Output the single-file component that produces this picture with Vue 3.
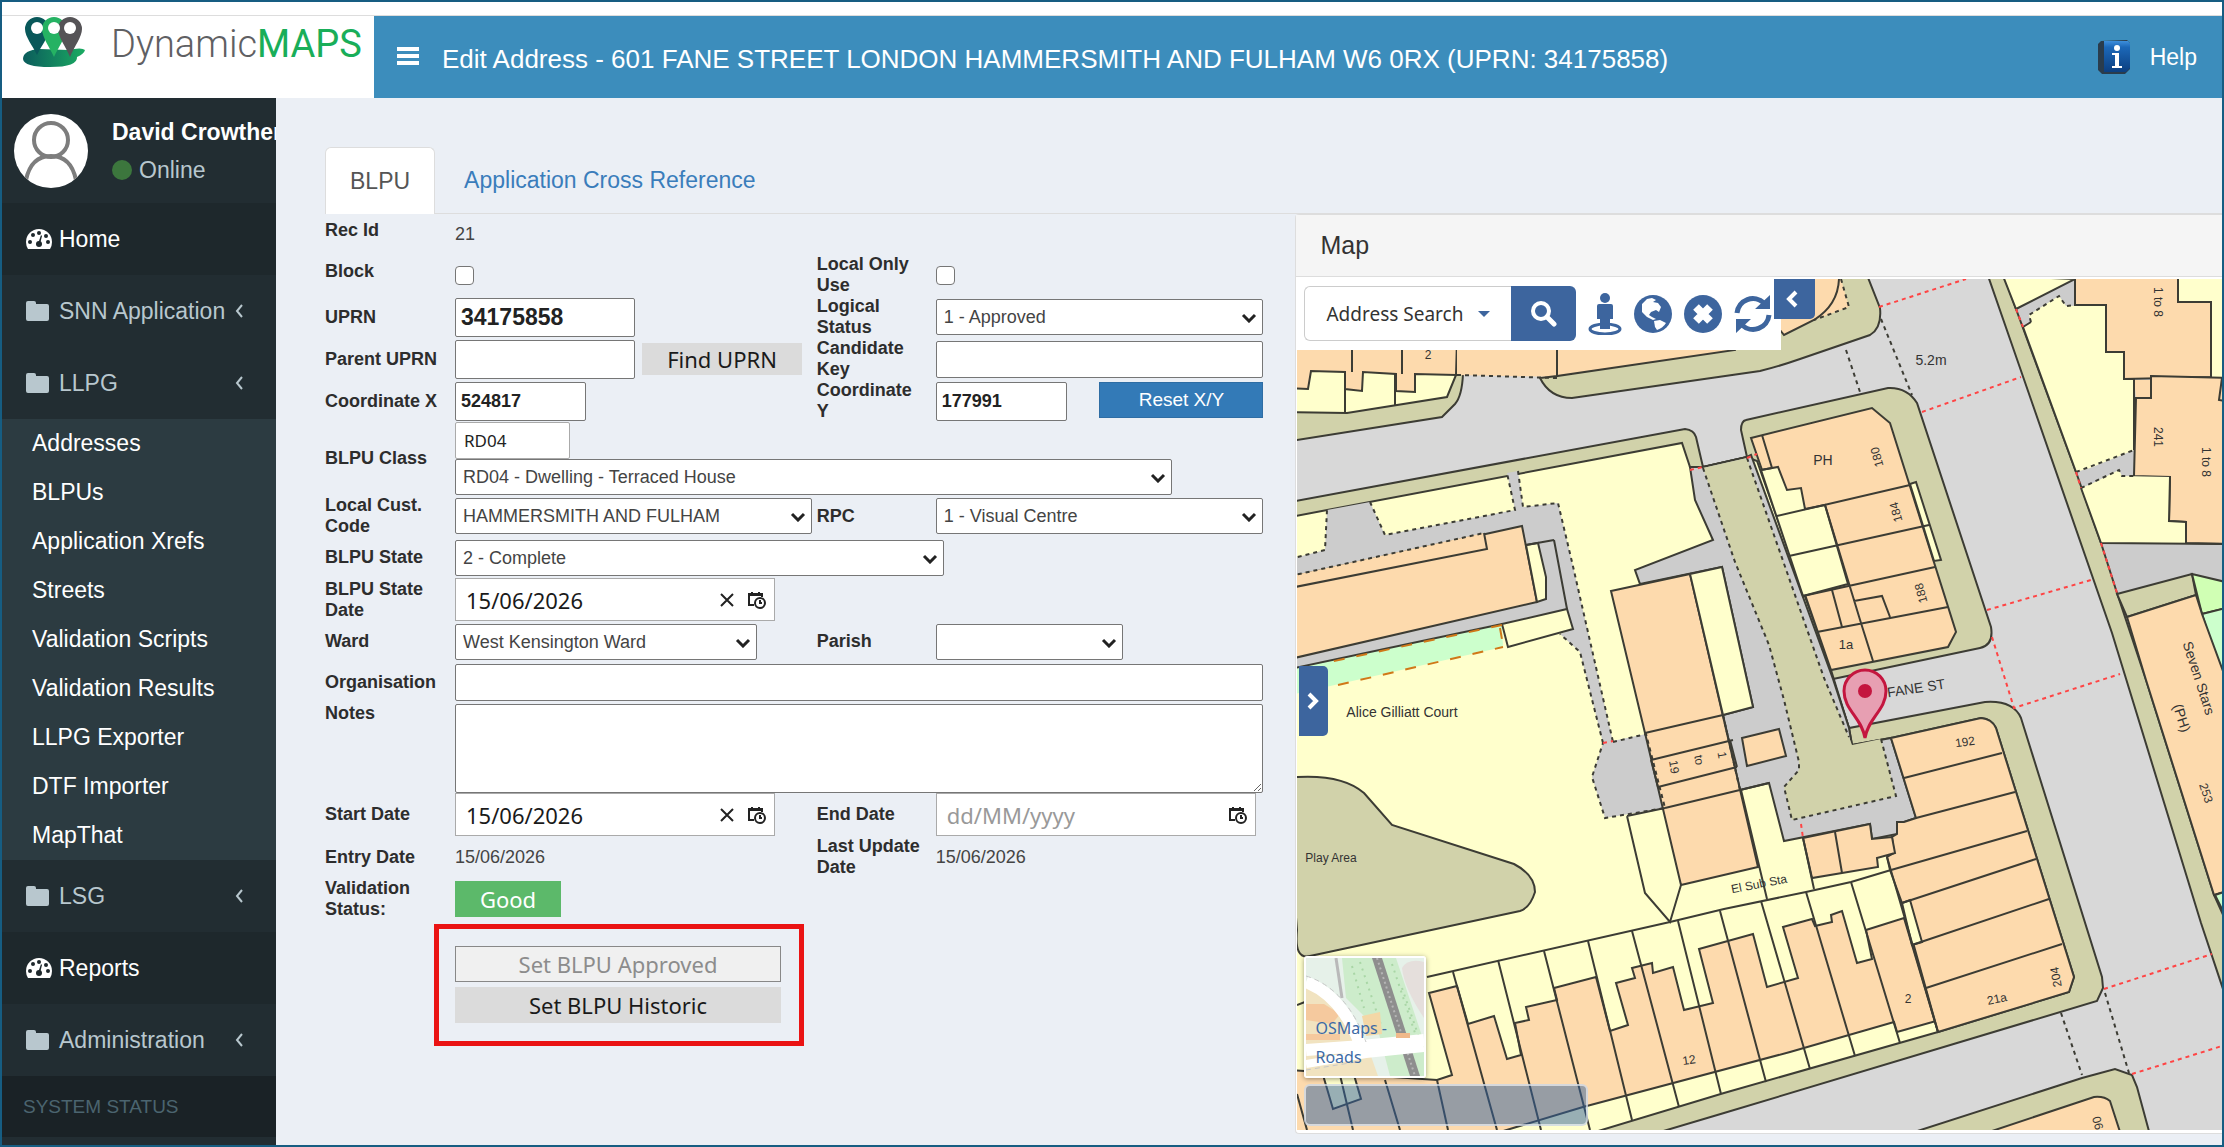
<script setup>
import { ref } from 'vue'

const llpgLinks = [
  'Addresses',
  'BLPUs',
  'Application Xrefs',
  'Streets',
  'Validation Scripts',
  'Validation Results',
  'LLPG Exporter',
  'DTF Importer',
  'MapThat'
]

const form = ref({
  block: false,
  localOnly: false,
  uprn: '34175858',
  parentUprn: '',
  candidateKey: '',
  x: '524817',
  y: '177991',
  classCode: 'RD04',
  stateDate: '15/06/2026',
  organisation: '',
  notes: '',
  startDate: '15/06/2026',
  endDate: ''
})

/* Map geometry, in map units: [class, path] */
const areas = [
  ['verge', 'M1290 502L1685 429Q1694 430 1696 437L1703 467L1747 457L1741 430Q1741 421 1746 420L1888 388Q1907 387 1917 403L1991 627Q1994 645 1980 648L1833 679L1849 728L1985 702Q2013 700 2021 718L2102 977L2103 988L2097 1001L1724 1113L1650 1135L1285 1135Z'],
  ['yard', 'M1290 517L1682 443L1690 467L1703 467L1747 457L1757 461L1831 670L1849 728L1852 745L1891 738L1981 718Q1992 719 1996 728L2074 977L2069 992L1938 1032L1724 1093L1585 1135L1285 1135Z'],
  ['path', 'M1690 467L1703 467L1747 457L1751 455L1833 679L1849 728L1852 745L1891 738L1916 818L1904 822L1897 822L1897 834L1872 839L1870 824L1784 841L1769 783L1740 790L1723 715L1753 707L1722 567L1640 584L1635 570L1713 540L1695 500Z'],
  ['verge plain', 'M1703 468L1735 562L1769 645L1784 700L1799 762L1799 770L1784 787L1792 820L1896 796L1881 739L1852 745L1849 737L1824 678L1747 458Z'],
  ['path plain', 'M1290 559L1325 550L1327 510L1370 502L1385 535L1515 510L1507 473L1518 471L1523 507L1558 503L1572 562L1613 742L1603 743L1580 652L1560 634L1573 629L1567 609L1290 669Z'],
  ['path plain', 'M1603 743L1646 734L1665 808L1605 818L1592 777Z'],
  ['house', 'M1290 577L1522 526L1537 602L1290 659Z'],
  ['house plain', 'M1290 576L1484 533L1487 549L1290 588Z'],
  ['yard', 'M1526 545L1538 543L1546 577L1546 599L1537 602Z'],
  ['mint plain', 'M1290 669L1502 624L1503 647L1290 695Z'],
  ['yard', 'M1502 624L1567 609L1573 629L1508 647Z'],
  ['house', 'M1611 591L1690 574L1758 867L1681 885L1645 733Z'],
  ['yard', 'M1690 574L1722 567L1753 707L1723 715Z'],
  ['house', 'M1742 738L1779 729L1786 756L1747 766Z'],
  ['verge', 'M1285 778Q1340 772 1364 793L1392 825L1514 864Q1535 875 1535 892Q1530 908 1520 911L1310 956Q1294 960 1297 930Z'],
  ['house', 'M1290 1070L1437 1080L1452 1075L1429 993L1457 986L1468 1024L1494 1016L1507 1059L1521 1055L1515 1023L1529 1020L1526 1007L1557 1000L1554 988L1596 977L1610 1031L1628 1025L1616 983L1635 978L1632 968L1652 963L1653 973L1673 967L1684 1010L1713 1003L1699 949L1753 934L1767 987L1798 978L1783 927L1812 919L1815 926L1832 922L1831 915L1842 911L1857 963L1872 959L1866 930L1904 918L1938 1032L1936 1021L1897 1032L1894 1022L1790 1052L1583 1107L1490 1135L1285 1135Z'],
  ['yard', 'M1323 1075L1333 1109L1361 1099L1354 1075Z'],
  ['house', 'M1891 738L1981 718Q1992 719 1996 728L2074 977L2069 992L1938 1032L1902 903L1890 870L1887 857L1894 853L1892 837L1897 834L1897 822L1904 822L1916 818Z'],
  ['yard', 'M1902 903L1910 900L1922 942L1912 945Z'],
  ['house', 'M1803 838L1870 824L1872 839L1892 837L1895 853L1877 858L1878 867L1812 878Z'],
  ['house', 'M1751 438L1872 408L1890 423L1956 632L1948 647L1831 670Z'],
  ['yard', 'M1761 470L1778 467L1787 490L1801 488L1805 509L1825 505L1848 584L1803 596Z'],
  ['yard', 'M1910 484L1916 482L1941 560L1934 561Z'],
  ['verge', 'M1285 442L1442 417L1455 404Q1462 396 1463 374L1440 370L1285 360Z'],
  ['yard', 'M1285 412L1347 413L1447 397L1456 375L1456 340L1285 340Z'],
  ['house', 'M1290 340L1457 340L1456 375L1415 374L1415 392L1396 391L1396 374L1363 372L1362 391L1345 389L1345 372L1311 371L1308 389L1290 388Z'],
  ['house plain', 'M1457 340L1557 340L1557 377L1457 375Z'],
  ['verge', 'M1540 378Q1550 398 1572 398L1760 371Q1780 366 1800 359L1870 335Q1882 328 1880 308L1865 270L1557 270L1557 376Z'],
  ['house', 'M1557 270L1557 376L1735 350L1735 270Z'],
  ['house plain', 'M1770 279L1841 279L1849 307L1814 320L1784 335L1780 330Z'],
  ['verge', 'M1986 270L2019 365L2112 633L2201 923L2230 1010L2230 270Z'],
  ['path', 'M2002 270L2016 309L2076 472L2101 543L2117 593L2146 680L2214 895L2230 930L2230 270Z'],
  ['yard', 'M2003 276L2075 279L2016 309Z'],
  ['yard plain', 'M2023 327L2031 322L2029 315L2059 296L2066 306L2106 305L2106 352L2124 352L2124 379L2134 379L2134 450L2090 468L2076 472Z'],
  ['house', 'M2075 270L2178 270L2178 302L2211 302L2211 377L2124 379L2124 352L2106 352L2106 305L2075 305Z'],
  ['yard', 'M2178 270L2230 270L2230 378L2211 378L2211 302L2178 302Z'],
  ['house', 'M2151 376L2230 378L2230 544L2186 543L2186 522L2169 521L2170 477L2134 476L2136 398L2151 398Z'],
  ['house plain', 'M2134 380L2150 380L2150 397L2136 397Z'],
  ['yard plain', 'M2081 488L2091 484L2119 470L2122 476L2170 477L2169 521L2186 522L2186 543L2101 543Z'],
  ['verge', 'M2117 594L2192 574L2196 595L2127 617Z'],
  ['lime', 'M2192 574L2230 583L2230 607L2202 614Z'],
  ['mint', 'M2202 614L2230 607L2230 690L2222 677Z'],
  ['house', 'M2127 617L2196 595L2202 614L2230 690L2230 890L2214 895L2146 680Z'],
  ['mint', 'M2215 895L2230 890L2230 925Z'],
  ['verge', 'M1905 1135L2082 1078L2115 1069L2132 1075L2137 1087L2150 1135Z'],
  ['house', 'M1980 1135L2094 1097Q2104 1096 2110 1101L2121 1135Z']
]

const lines = [
  'M1290 588L1487 549L1484 533',
  'M1554 540L1567 609M1526 545L1554 540M1290 669L1502 624',
  'M1645 733L1723 715M1651 760L1733 740M1658 787L1737 767M1665 808L1769 783',
  'M1730 740L1737 767M1651 760L1658 787',
  'M1627 816L1645 893L1670 922L1681 885M1627 816L1665 808',
  'M1427 977L1670 922L1724 909L1806 892L1851 882L1891 870',
  'M1453 972L1497 1130M1498 960L1541 1130M1544 951L1590 1130M1588 941L1632 1120M1632 931L1679 1107M1678 921L1721 1094M1720 911L1766 1082M1761 901L1810 1069M1806 892L1855 1056M1851 882L1900 1043M1887 857L1938 1032',
  'M1437 1080L1448 1130M1385 1080L1400 1130M1340 1075L1353 1130M1297 1094L1307 1130M1297 1005L1310 1000',
  'M1904 778L2002 753M1916 818L2015 792M1891 870L2027 831M1902 903L2036 859M1912 945L2049 899M1926 988L2062 944',
  'M1835 832L1842 873M1803 838L1814 889M1741 790L1767 899',
  'M1762 435L1772 468L1761 470M1777 516L1910 485M1789 556L1929 525M1803 596L1935 567M1817 632L1948 607M1825 505L1861 623L1873 661M1832 590L1842 627M1854 601L1882 596L1890 617',
  'M1352 340V372M1402 340V374M1345 372V413M1395 374V405',
  'M1839 279Q1838 305 1814 320L1784 335L1780 330',
  'M2023 327L2076 472M2081 488L2101 543L2230 544M2023 327L2031 322M2106 305V352H2124V379H2134V450M2170 477L2169 521L2186 522V543',
  'M2222 378L2219 400L2224 401'
]

const dashes = [
  'M1703 468L1735 562L1769 645L1784 700L1799 762L1799 770L1784 787L1792 820L1896 796L1881 739',
  'M1747 458L1824 678L1849 737',
  'M1290 559L1325 550L1327 510M1370 502L1385 535L1515 510L1507 473M1518 471L1523 507L1558 503L1572 562L1613 742M1603 743L1580 652L1560 634M1290 576L1484 533',
  'M1613 742L1646 734L1665 808L1605 818L1592 777L1603 743',
  'M1723 715L1740 790M1457 375L1557 378M1841 279L1849 307L1814 320',
  'M1881 319L1912 395M1846 350L1861 395M2061 1013L2082 1075M2105 993L2129 1073',
  'M2031 322L2029 315L2059 296L2066 306L2075 305M2076 472L2134 450M2081 488L2119 470L2122 476L2134 476'
]

const reds = [
  'M1879 307L1966 279M1922 412L2021 377M1987 610L2091 580M1992 637L2014 708L2120 674M2104 989L2212 954M2132 1074L2222 1046',
  'M2016 309L2023 327M2076 472L2081 488M2101 543L2117 593M1690 470L1703 467M1747 458L1757 454M1603 743L1613 741M1801 824L1803 838'
]

/* [text, x, y, rotation, size] */
const labels = [
  ['2', 1428, 355, 0, 12],
  ['PH', 1823, 460, 0, 14],
  ['180', 1877, 457, -105, 12],
  ['184', 1896, 512, -105, 12],
  ['188', 1921, 593, -105, 12],
  ['1a', 1846, 644, 0, 13],
  ['5.2m', 1931, 360, 0, 14],
  ['FANE ST', 1916, 688, -9, 14],
  ['192', 1965, 742, -8, 12],
  ['2', 1908, 999, 0, 12],
  ['21a', 1997, 999, -12, 12],
  ['204', 2056, 977, -100, 12],
  ['90', 2098, 1123, -105, 12],
  ['253', 2206, 793, 72, 12],
  ['Seven Stars', 2199, 678, 72, 14],
  ['(PH)', 2182, 718, 72, 14],
  ['241', 2158, 437, 90, 12],
  ['1 to 8', 2158, 302, 90, 12],
  ['1 to 8', 2206, 462, 90, 12],
  ['Alice Gilliatt Court', 1402, 712, 0, 14],
  ['Play Area', 1331, 858, 0, 12],
  ['El Sub Sta', 1759, 884, -11, 12],
  ['12', 1689, 1060, -8, 12],
  ['19', 1674, 767, 80, 12],
  ['to', 1699, 760, 80, 12],
  ['1', 1722, 755, 80, 12]
]
</script>

<template>
  <div class="page">
    <div class="strip"></div>
    <header class="header">
      <a class="brand" href="#">
        <svg class="brand-mark" viewBox="0 0 64 52" aria-hidden="true">
          <defs>
            <linearGradient id="pool" x1="0" x2="1"><stop offset="0" stop-color="#0b5c5c" /><stop offset="1" stop-color="#1bab62" /></linearGradient>
          </defs>
          <path d="M1 43Q1 34 18 33L46 34Q60 31 63 34Q62 38 55 41Q56 51 28 51Q2 51 1 43Z" fill="url(#pool)" />
          <path d="M15 1a12 12 0 0 1 12 12C27 21 19 30 15 39C11 30 3 21 3 13A12 12 0 0 1 15 1Z" fill="#09585a" />
          <path d="M32 1a12 12 0 0 1 12 12C44 21 36 32 32 41C28 32 20 21 20 13A12 12 0 0 1 32 1Z" fill="#25b263" />
          <path d="M48 1a12 12 0 0 1 12 12C60 21 52 31 48 41C44 31 36 21 36 13A12 12 0 0 1 48 1Z" fill="#555356" />
          <circle cx="15" cy="12" r="6" fill="#fff" /><circle cx="32" cy="12" r="6" fill="#fff" /><circle cx="48" cy="12" r="6" fill="#fff" />
        </svg>
        <span class="brand-name">Dynamic<b>MAPS</b></span>
      </a>
      <button class="burger" type="button" aria-label="Toggle navigation">
        <svg viewBox="0 0 22 18" width="22" height="18"><path d="M0 2h22M0 9h22M0 16h22" stroke="#fff" stroke-width="4" /></svg>
      </button>
      <h1>Edit Address - 601 FANE STREET LONDON HAMMERSMITH AND FULHAM W6 0RX (UPRN: 34175858)</h1>
      <a class="help" href="#">
        <svg viewBox="0 0 34 36" width="34" height="36" aria-hidden="true">
          <defs>
            <linearGradient id="book" x1="0" y1="0" x2="0" y2="1"><stop offset="0" stop-color="#3e8fdc" /><stop offset=".2" stop-color="#1c68b8" /><stop offset="1" stop-color="#0c3f80" /></linearGradient>
          </defs>
          <path d="M4 2L30 1L33 4V30L28 35H5L1 31V5Z" fill="#2a3c4c" />
          <path d="M7 2H31L33 4V29L29 33H7Z" fill="url(#book)" />
          <circle cx="20" cy="9" r="3" fill="#fff" />
          <path d="M15 14h7v13h3v2H15v-2h3V16h-3z" fill="#fff" />
        </svg>
        <span>Help</span>
      </a>
    </header>

    <div class="body">
      <aside class="sidebar">
        <div class="user">
          <svg class="avatar" viewBox="0 0 74 74" width="74" height="74" aria-hidden="true">
            <defs><clipPath id="face"><circle cx="37" cy="37" r="37" /></clipPath></defs>
            <circle cx="37" cy="37" r="37" fill="#fff" />
            <g clip-path="url(#face)" fill="none" stroke="#7d7d7d" stroke-width="4">
              <circle cx="37" cy="26" r="17" />
              <path d="M12 66Q17 42 37 42Q57 42 62 66" />
            </g>
          </svg>
          <div class="user-text">
            <strong>David Crowther</strong>
            <a href="#"><i class="dot"></i>Online</a>
          </div>
        </div>
        <nav>
          <a class="item active" href="#">
            <svg class="ico" viewBox="0 0 26 20"><path d="M2 20Q0 17 0 13A13 13 0 0 1 26 13Q26 17 24 20Z" fill="#fff" /><g fill="#1e282c"><circle cx="4" cy="13" r="2" /><circle cx="7" cy="6" r="2" /><circle cx="13" cy="4" r="2" /><circle cx="20" cy="7" r="2" /><circle cx="22" cy="13" r="2" /><circle cx="13" cy="15" r="3" /><path d="M12 15L15 6L16 7L14 15Z" /></g></svg>
            <span>Home</span>
          </a>
          <a class="item" href="#">
            <svg class="ico" viewBox="0 0 26 20"><path d="M0 2Q0 0 2 0H8Q10 0 10 2V3H21Q23 3 23 5V18Q23 20 21 20H2Q0 20 0 18Z" fill="#b8c7ce" /></svg>
            <span>SNN Application</span>
            <svg class="chev" viewBox="0 0 8 14"><path d="M7 1L2 7L7 13" /></svg>
          </a>
          <a class="item" href="#">
            <svg class="ico" viewBox="0 0 26 20"><path d="M0 2Q0 0 2 0H8Q10 0 10 2V3H21Q23 3 23 5V18Q23 20 21 20H2Q0 20 0 18Z" fill="#b8c7ce" /></svg>
            <span>LLPG</span>
            <svg class="chev" viewBox="0 0 8 14"><path d="M7 1L2 7L7 13" /></svg>
          </a>
          <ul class="sub">
            <li v-for="link in llpgLinks" :key="link"><a href="#">{{ link }}</a></li>
          </ul>
          <a class="item" href="#">
            <svg class="ico" viewBox="0 0 26 20"><path d="M0 2Q0 0 2 0H8Q10 0 10 2V3H21Q23 3 23 5V18Q23 20 21 20H2Q0 20 0 18Z" fill="#b8c7ce" /></svg>
            <span>LSG</span>
            <svg class="chev" viewBox="0 0 8 14"><path d="M7 1L2 7L7 13" /></svg>
          </a>
          <a class="item active" href="#">
            <svg class="ico" viewBox="0 0 26 20"><path d="M2 20Q0 17 0 13A13 13 0 0 1 26 13Q26 17 24 20Z" fill="#fff" /><g fill="#1e282c"><circle cx="4" cy="13" r="2" /><circle cx="7" cy="6" r="2" /><circle cx="13" cy="4" r="2" /><circle cx="20" cy="7" r="2" /><circle cx="22" cy="13" r="2" /><circle cx="13" cy="15" r="3" /><path d="M12 15L15 6L16 7L14 15Z" /></g></svg>
            <span>Reports</span>
          </a>
          <a class="item" href="#">
            <svg class="ico" viewBox="0 0 26 20"><path d="M0 2Q0 0 2 0H8Q10 0 10 2V3H21Q23 3 23 5V18Q23 20 21 20H2Q0 20 0 18Z" fill="#b8c7ce" /></svg>
            <span>Administration</span>
            <svg class="chev" viewBox="0 0 8 14"><path d="M7 1L2 7L7 13" /></svg>
          </a>
          <div class="status">SYSTEM STATUS</div>
        </nav>
      </aside>

      <main class="main">
        <nav class="tabs">
          <a class="tab current" href="#">BLPU</a>
          <a class="tab" href="#">Application Cross Reference</a>
        </nav>

        <div class="columns">
          <form class="form" @submit.prevent>
            <div class="row first">
              <span class="label up">Rec Id</span>
              <span class="value">21</span>
            </div>
            <div class="row">
              <label for="block" class="up">Block</label>
              <span class="cell"><input id="block" v-model="form.block" type="checkbox" /></span>
              <label for="local">Local Only Use</label>
              <span class="cell"><input id="local" v-model="form.localOnly" type="checkbox" /></span>
            </div>
            <div class="row">
              <label for="uprn">UPRN</label>
              <span class="cell"><input id="uprn" v-model="form.uprn" class="box w180 big" type="text" /></span>
              <label for="logical">Logical Status</label>
              <span class="select full"><select id="logical"><option>1 - Approved</option></select><svg viewBox="0 0 16 10"><path d="M2 2L8 8L14 2" /></svg></span>
            </div>
            <div class="row">
              <label for="parent">Parent UPRN</label>
              <span class="cell">
                <input id="parent" v-model="form.parentUprn" class="box w180" type="text" />
                <button class="btn find" type="button">Find UPRN</button>
              </span>
              <label for="candidate">Candidate Key</label>
              <span class="cell"><input id="candidate" v-model="form.candidateKey" class="box full" type="text" /></span>
            </div>
            <div class="row">
              <label for="cx">Coordinate X</label>
              <span class="cell"><input id="cx" v-model="form.x" class="box w131 bold" type="text" /></span>
              <label for="cy">Coordinate Y</label>
              <span class="cell spread">
                <input id="cy" v-model="form.y" class="box w131 bold" type="text" />
                <button class="btn reset" type="button">Reset X/Y</button>
              </span>
            </div>
            <div class="row tall">
              <label for="cls">BLPU Class</label>
              <div class="stack">
                <input v-model="form.classCode" class="box code" type="text" aria-label="BLPU class code" />
                <span class="select cls"><select id="cls"><option>RD04 - Dwelling - Terraced House</option></select><svg viewBox="0 0 16 10"><path d="M2 2L8 8L14 2" /></svg></span>
              </div>
            </div>
            <div class="row">
              <label for="cust">Local Cust. Code</label>
              <span class="select w357"><select id="cust"><option>HAMMERSMITH AND FULHAM</option></select><svg viewBox="0 0 16 10"><path d="M2 2L8 8L14 2" /></svg></span>
              <label for="rpc">RPC</label>
              <span class="select full"><select id="rpc"><option>1 - Visual Centre</option></select><svg viewBox="0 0 16 10"><path d="M2 2L8 8L14 2" /></svg></span>
            </div>
            <div class="row slim">
              <label for="state">BLPU State</label>
              <span class="select w489"><select id="state"><option>2 - Complete</option></select><svg viewBox="0 0 16 10"><path d="M2 2L8 8L14 2" /></svg></span>
            </div>
            <div class="row">
              <label for="sdate">BLPU State Date</label>
              <span class="date">
                <input id="sdate" v-model="form.stateDate" type="text" />
                <button type="button" aria-label="Clear"><svg viewBox="0 0 14 14" width="14" height="14"><path d="M1 1L13 13M13 1L1 13" /></svg></button>
                <button type="button" aria-label="Pick date"><svg viewBox="0 0 18 18" width="18" height="18"><path d="M6 14H1V3H14V6M1 4H14M4 1V4M11 1V4" /><circle cx="12" cy="12" r="5" /><path d="M12 9V12H14" /></svg></button>
              </span>
            </div>
            <div class="row slim">
              <label for="ward">Ward</label>
              <span class="select w302"><select id="ward"><option>West Kensington Ward</option></select><svg viewBox="0 0 16 10"><path d="M2 2L8 8L14 2" /></svg></span>
              <label for="parish">Parish</label>
              <span class="select w187"><select id="parish"><option></option></select><svg viewBox="0 0 16 10"><path d="M2 2L8 8L14 2" /></svg></span>
            </div>
            <div class="row slim">
              <label for="org">Organisation</label>
              <span class="cell wide"><input id="org" v-model="form.organisation" class="box full" type="text" /></span>
            </div>
            <div class="row notes">
              <label for="notes">Notes</label>
              <span class="cell wide"><textarea id="notes" v-model="form.notes"></textarea></span>
            </div>
            <div class="row">
              <label for="start">Start Date</label>
              <span class="date">
                <input id="start" v-model="form.startDate" type="text" />
                <button type="button" aria-label="Clear"><svg viewBox="0 0 14 14" width="14" height="14"><path d="M1 1L13 13M13 1L1 13" /></svg></button>
                <button type="button" aria-label="Pick date"><svg viewBox="0 0 18 18" width="18" height="18"><path d="M6 14H1V3H14V6M1 4H14M4 1V4M11 1V4" /><circle cx="12" cy="12" r="5" /><path d="M12 9V12H14" /></svg></button>
              </span>
              <label for="end">End Date</label>
              <span class="date">
                <input id="end" v-model="form.endDate" type="text" placeholder="dd/MM/yyyy" />
                <button type="button" aria-label="Pick date"><svg viewBox="0 0 18 18" width="18" height="18"><path d="M6 14H1V3H14V6M1 4H14M4 1V4M11 1V4" /><circle cx="12" cy="12" r="5" /><path d="M12 9V12H14" /></svg></button>
              </span>
            </div>
            <div class="row">
              <span class="label">Entry Date</span>
              <span class="value">15/06/2026</span>
              <span class="label">Last Update Date</span>
              <span class="value">15/06/2026</span>
            </div>
            <div class="row">
              <span class="label">Validation Status:</span>
              <span class="cell"><button class="btn good" type="button">Good</button></span>
            </div>
            <div class="actions">
              <button class="btn approve" type="button" disabled>Set BLPU Approved</button>
              <button class="btn" type="button">Set BLPU Historic</button>
            </div>
          </form>

          <section class="panel">
            <h2>Map</h2>
            <div class="map">
              <svg class="canvas" viewBox="1297 279 925 851" preserveAspectRatio="xMinYMin slice">
                <rect x="1290" y="270" width="1000" height="900" fill="#d8d8d8" />
                <path v-for="(a, i) in areas" :key="'a' + i" :class="['area', a[0]]" :d="a[1]" />
                <path v-for="(l, i) in lines" :key="'l' + i" class="line" :d="l" />
                <path v-for="(d, i) in dashes" :key="'d' + i" class="dash" :d="d" />
                <path v-for="(r, i) in reds" :key="'r' + i" class="red" :d="r" />
                <path class="hedge" d="M1338 685L1503 647M1502 625L1325 663M1500 628L1503 645" />
                <text
                  v-for="(t, i) in labels"
                  :key="'t' + i"
                  :x="t[1]"
                  :y="t[2]"
                  :font-size="t[4]"
                  :transform="`rotate(${t[3]} ${t[1]} ${t[2]})`"
                >{{ t[0] }}</text>
                <path class="pin" d="M1865 738C1862 718 1844 710 1844 691A21 21 0 0 1 1886 691C1886 710 1868 718 1865 738Z" />
                <circle cx="1865" cy="691" r="7" fill="#c4163f" />
              </svg>

              <div class="tools">
                <button class="search-kind" type="button">Address Search<i class="caret"></i></button>
                <button class="go" type="button" aria-label="Search">
                  <svg viewBox="0 0 26 26" width="26" height="26"><circle cx="10" cy="10" r="8" fill="none" stroke="#fff" stroke-width="4" /><path d="M16 16L23 23" stroke="#fff" stroke-width="5" stroke-linecap="round" /></svg>
                </button>
                <button class="tool" type="button" aria-label="Street view">
                  <svg viewBox="0 0 34 42" width="34" height="42"><ellipse cx="17" cy="36" rx="15" ry="5" fill="none" stroke="#3d659e" stroke-width="3" /><circle cx="17" cy="5" r="5" /><path d="M9 13Q9 11 11 11H23Q25 11 25 13V26H22V36H12V26H9Z" /></svg>
                </button>
                <button class="tool" type="button" aria-label="Full extent">
                  <svg viewBox="0 0 38 38" width="38" height="38"><circle cx="19" cy="19" r="19" /><path d="M8 9L13 4L18 3L22 5L19 7L24 8L27 12L25 17L22 15L17 17L15 20L18 22L22 24L19 25L13 22L8 17Z" fill="#fff" /><path d="M20 26L26 25L32 28Q29 33 23 35L21 32Z" fill="#fff" /></svg>
                </button>
                <button class="tool" type="button" aria-label="Clear map">
                  <svg viewBox="0 0 38 38" width="38" height="38"><circle cx="19" cy="19" r="19" /><path d="M12 12L26 26M26 12L12 26" stroke="#fff" stroke-width="8" /></svg>
                </button>
                <button class="tool" type="button" aria-label="Refresh">
                  <svg viewBox="0 0 38 38" width="38" height="38"><path d="M3 18A16 16 0 0 1 30 8M35 20A16 16 0 0 1 8 30" fill="none" stroke="#3d659e" stroke-width="5" /><path d="M36 0V14H21ZM2 38V24H17Z" /></svg>
                </button>
              </div>
              <button class="fold" type="button" aria-label="Hide toolbar"><svg viewBox="0 0 14 18" width="14" height="18"><path d="M12 2L5 9L12 16" /></svg></button>
              <button class="drawer" type="button" aria-label="Show layers"><svg viewBox="0 0 14 18" width="14" height="18"><path d="M2 2L9 9L2 16" /></svg></button>

              <a class="thumb" href="#">
                <svg viewBox="0 0 118 118" preserveAspectRatio="none" aria-hidden="true">
                  <rect width="118" height="118" fill="#e6f1e9" />
                  <path d="M36 0H90L118 84V118H84L72 72L40 40Z" fill="#cdeccb" />
                  <path d="M86 6L112 84M96 30L116 88M46 8L58 50M54 4L76 70" stroke="#a9d6a6" stroke-width="2" stroke-dasharray="2 5" />
                  <path d="M0 26Q30 34 46 58L60 84L72 118H0Z" fill="#f1e3c0" />
                  <path d="M0 46L18 46L34 56L26 66L0 62Z" fill="#f5c99e" />
                  <path d="M0 76H34V82H0Z" fill="#f5c99e" />
                  <path d="M56 58L74 54L76 76L60 78Z" fill="#f3d7a6" />
                  <path d="M66 0H76L114 118H104Z" fill="#8e8e8e" />
                  <path d="M71 0L109 118" stroke="#b5b5b5" stroke-width="2" stroke-dasharray="2 3" />
                  <path d="M96 10Q102 0 118 4V60Q98 30 96 10Z" fill="#e5dfdc" />
                  <path d="M30 0L36 40" stroke="#b9b9b9" stroke-width="3" />
                  <path d="M0 24Q36 38 54 86M0 92L56 88L118 82" fill="none" stroke="#fff" stroke-width="12" />
                  <path d="M0 106L60 96L118 90" fill="none" stroke="#fff" stroke-width="8" />
                  <path d="M0 18Q40 30 60 84M0 112L50 104" fill="none" stroke="#c7c7c7" stroke-width="1" stroke-dasharray="5 4" />
                  <path d="M90 75H104V80H90Z" fill="#f0b98a" />
                </svg>
                <span>OSMaps - Roads</span>
              </a>
              <div class="scale"></div>
            </div>
          </section>
        </div>
      </main>
    </div>
  </div>
</template>

<style>
body {
  margin: 0;
}
</style>

<style scoped>
* {
  box-sizing: border-box;
}
.page {
  min-height: 100vh;
  display: flex;
  flex-direction: column;
  border: 2px solid #165d82;
  background: #ebeff5;
  font-family: "Liberation Sans", Arial, sans-serif;
  font-size: 18px;
  color: #333;
  overflow: hidden;
}
a {
  text-decoration: none;
  color: inherit;
}
button {
  font: inherit;
  border: 0;
  padding: 0;
  background: none;
  cursor: pointer;
}
.strip {
  height: 14px;
  background: #fff;
  border-bottom: 1px solid #ddd;
}
.header {
  height: 82px;
  display: flex;
  align-items: flex-start;
  background: #3c8dbc;
  color: #fff;
}
.brand {
  width: 372px;
  height: 82px;
  flex: none;
  display: flex;
  align-items: flex-start;
  padding-left: 20px;
  gap: 25px;
  background: #fff;
}
.brand-mark {
  width: 64px;
  height: 52px;
}
.brand-name {
  font: 300 38px/56px Roboto, sans-serif;
  color: #5f6063;
}
.brand-name b {
  font-weight: 400;
  color: #19ae59;
}
.burger {
  height: 80px;
  margin-left: 23px;
  display: flex;
  align-items: center;
}
h1 {
  flex: 1;
  margin: 0 0 0 23px;
  font-size: 26px;
  font-weight: 400;
  line-height: 86px;
  white-space: nowrap;
}
.help {
  display: flex;
  align-items: center;
  height: 82px;
  gap: 19px;
  padding-right: 25px;
  font-size: 23px;
}
.body {
  flex: 1;
  display: flex;
}
.sidebar {
  width: 274px;
  flex: none;
  background: #222d32;
  color: #b8c7ce;
  font-size: 23px;
  overflow: hidden;
}
.user {
  display: flex;
  height: 105px;
  padding: 16px 0 0 12px;
  gap: 24px;
}
.avatar {
  flex: none;
}
.user-text {
  display: flex;
  flex-direction: column;
  gap: 12px;
  line-height: 26px;
  white-space: nowrap;
}
.user-text strong {
  color: #fff;
  padding-top: 5px;
}
.user-text a {
  display: flex;
  align-items: center;
  gap: 7px;
}
.dot {
  width: 20px;
  height: 20px;
  border-radius: 50%;
  background: #3c763d;
}
.item {
  height: 72px;
  display: flex;
  align-items: center;
  padding: 0 33px 0 24px;
}
.item span {
  flex: 1;
  margin-left: 7px;
  white-space: nowrap;
}
.item.active {
  background: #1e282c;
  color: #fff;
}
.ico {
  width: 26px;
  height: 20px;
}
.chev {
  width: 8px;
  height: 14px;
  fill: none;
  stroke: #b8c7ce;
  stroke-width: 2;
}
.sub {
  margin: 0;
  padding: 0;
  list-style: none;
  background: #2c3b41;
  color: #fff;
}
.sub a {
  display: block;
  line-height: 49px;
  padding-left: 30px;
}
.status {
  height: 61px;
  padding-left: 21px;
  line-height: 61px;
  font-size: 19px;
  color: #4b646f;
  background: #1a2226;
}
.main {
  flex: 1;
  min-width: 0;
  padding: 49px 0 10px 49px;
}
.tabs {
  display: flex;
  height: 67px;
  border-bottom: 1px solid #ddd;
}
.tab {
  height: 67px;
  padding: 0 29px;
  line-height: 66px;
  font-size: 23px;
  color: #3a7dbb;
}
.tab.current {
  padding: 0 24px;
  background: #fff;
  border: 1px solid #ddd;
  border-bottom: 0;
  border-radius: 6px 6px 0 0;
  color: #555;
}
.columns {
  display: flex;
  gap: 32px;
}
.form {
  flex: 203 1 0;
  min-width: 0;
}
.row {
  display: grid;
  grid-template-columns: 130px minmax(0, 361fr) 119px minmax(0, 327fr);
  align-items: center;
  min-height: 42px;
}
.row.first {
  min-height: 40px;
}
.row.slim {
  min-height: 41px;
}
.row.tall {
  min-height: 73px;
}
.row.notes {
  min-height: 90px;
}
label,
.label {
  font-weight: 700;
  line-height: 21px;
  color: #2d2d2d;
  padding-right: 8px;
}
.row .up {
  padding-bottom: 8px;
}
.notes label {
  align-self: start;
}
.value {
  color: #444;
}
.cell {
  display: flex;
  align-items: center;
  gap: 7px;
}
.spread {
  justify-content: space-between;
  align-items: flex-start;
}
.wide {
  grid-column: 2 / 5;
}
.stack {
  grid-column: 2 / 5;
  display: flex;
  flex-direction: column;
}
input[type="checkbox"] {
  appearance: none;
  width: 19px;
  height: 19px;
  margin: 0;
  border: 1px solid #767676;
  border-radius: 4px;
  background: #fff;
}
.box {
  height: 39px;
  padding: 0 5px;
  border: 1px solid #767676;
  border-radius: 2px;
  background: #fff;
  font: inherit;
  color: #222;
}
.w180 {
  width: 180px;
}
.w131 {
  width: 131px;
}
.bold {
  font-weight: 700;
}
.big {
  font-size: 23px;
  font-weight: 700;
}
.box.full {
  width: 100%;
  height: 37px;
}
.code {
  width: 115px;
  height: 37px;
  padding: 0 8px;
  border-color: #aaa;
  font: 17px "Noto Sans", sans-serif;
}
.select {
  position: relative;
  display: block;
  height: 36px;
}
.select select {
  appearance: none;
  display: block;
  width: 100%;
  height: 100%;
  padding: 0 24px 0 7px;
  border: 1px solid #767676;
  border-radius: 2px;
  background: #fff;
  font: inherit;
  color: #444;
}
.select svg {
  position: absolute;
  right: 6px;
  top: 14px;
  width: 16px;
  height: 10px;
  fill: none;
  stroke: #222;
  stroke-width: 3;
  pointer-events: none;
}
.cls {
  width: 717px;
  max-width: 100%;
}
.w357 {
  width: 357px;
}
.w489 {
  width: 489px;
}
.w302 {
  width: 302px;
}
.w187 {
  width: 187px;
}
.btn {
  height: 36px;
  background: #dbdbdb;
  color: #1a1a1a;
  font: 22px/32px "Noto Sans", sans-serif;
}
.find {
  width: 160px;
  height: 32px;
}
.reset {
  width: 164px;
  background: #337ab7;
  border: 1px solid #2e6da4;
  color: #fff;
  font: 19px/32px "Liberation Sans", Arial, sans-serif;
}
.good {
  width: 106px;
  background: #5cb96a;
  color: #fff;
}
.date {
  width: 320px;
  height: 43px;
  display: flex;
  align-items: center;
  padding: 0 8px 0 10px;
  border: 1px solid #aaa;
  background: #fff;
}
.date input {
  flex: 1;
  min-width: 0;
  border: 0;
  padding: 0;
  outline: 0;
  background: none;
  font: 22px/28px "Noto Sans", sans-serif;
  color: #1a1a1a;
}
.date input::placeholder {
  color: #999;
  opacity: 1;
}
.date button {
  display: flex;
  margin-left: 14px;
}
.date svg {
  fill: none;
  stroke: #222;
  stroke-width: 2;
}
textarea {
  width: 100%;
  height: 89px;
  border: 1px solid #767676;
  border-radius: 2px;
  background: #fff;
  font: inherit;
}
.actions {
  width: 370px;
  display: flex;
  flex-direction: column;
  gap: 5px;
  margin: 4px 0 0 109px;
  padding: 17px 18px 18px 16px;
  border: 5px solid #ea1313;
}
.approve {
  background: #f0f0f0;
  border: 1px solid #888;
  color: #8c8c8c;
}
.panel {
  flex: 200 1 0;
  min-width: 0;
  align-self: flex-start;
  border: 1px solid #ddd;
  border-right: 0;
  border-radius: 4px 0 0 4px;
  background: #fff;
  padding: 0 0 3px 1px;
}
h2 {
  margin: 0 0 2px -1px;
  padding-left: 24px;
  font-size: 25px;
  font-weight: 400;
  line-height: 61px;
  background: #f5f5f5;
  border-bottom: 1px solid #ddd;
}
.map {
  position: relative;
  height: 851px;
}
.canvas {
  display: block;
  width: 100%;
  height: 100%;
}
.area {
  stroke: #3c3c34;
  stroke-width: 2;
}
.area.plain {
  stroke: none;
}
.verge {
  fill: #d1d2aa;
}
.yard {
  fill: #ffc;
}
.path {
  fill: #ccc;
}
.house {
  fill: #fddaad;
}
.mint {
  fill: #cfc;
}
.lime {
  fill: #d0ffb4;
}
.line {
  fill: none;
  stroke: #3c3c34;
  stroke-width: 2;
}
.dash {
  fill: none;
  stroke: #3c3c34;
  stroke-width: 2;
  stroke-dasharray: 4 4;
}
.red {
  fill: none;
  stroke: #f44;
  stroke-width: 2;
  stroke-dasharray: 4 4;
}
.hedge {
  fill: none;
  stroke: #d07818;
  stroke-width: 2;
  stroke-dasharray: 11 12;
}
.canvas text {
  text-anchor: middle;
  dominant-baseline: central;
  fill: #333;
}
.pin {
  fill: #e79fb2;
  stroke: #c4163f;
  stroke-width: 3;
}
.tools {
  position: absolute;
  left: 0;
  top: -2px;
  height: 73px;
  display: flex;
  align-items: center;
  padding: 0 9px 0 7px;
  background: #fff;
}
.search-kind {
  width: 207px;
  height: 55px;
  display: flex;
  align-items: center;
  gap: 15px;
  padding-left: 21px;
  border: 1px solid #ccc;
  border-right: 0;
  border-radius: 6px 0 0 6px;
  font: 19px "Noto Sans", sans-serif;
  color: #333;
  white-space: nowrap;
}
.caret {
  border: 6px solid transparent;
  border-top-color: #3d659e;
  border-bottom: 0;
}
.go {
  width: 65px;
  height: 55px;
  display: flex;
  align-items: center;
  justify-content: center;
  background: #3d659e;
  border-radius: 0 6px 6px 0;
}
.tool {
  display: flex;
  margin-left: 12px;
  fill: #3d659e;
}
.fold,
.drawer {
  position: absolute;
  display: flex;
  align-items: center;
  justify-content: center;
  background: #3d659e;
  fill: none;
  stroke: #fff;
  stroke-width: 4;
}
.fold {
  left: 477px;
  top: 0;
  width: 41px;
  height: 40px;
  padding-right: 8px;
  border-radius: 0 0 5px 0;
}
.drawer {
  left: 2px;
  top: 387px;
  width: 29px;
  height: 70px;
  border-radius: 0 5px 5px 0;
}
.thumb {
  position: absolute;
  left: 7px;
  top: 677px;
  width: 122px;
  height: 122px;
  border: 2px solid #fff;
  border-radius: 3px;
  box-shadow: 0 1px 5px rgba(0, 0, 0, 0.4);
}
.thumb svg {
  display: block;
  width: 100%;
  height: 100%;
}
.thumb span {
  position: absolute;
  left: 9px;
  top: 56px;
  width: 90px;
  font: 16px/29px "Noto Sans", sans-serif;
  color: #3d6aa5;
}
.scale {
  position: absolute;
  left: 7px;
  top: 805px;
  width: 284px;
  height: 42px;
  border: 2px solid rgba(255, 255, 255, 0.6);
  border-radius: 6px;
  background: rgba(49, 96, 156, 0.5);
}
</style>
